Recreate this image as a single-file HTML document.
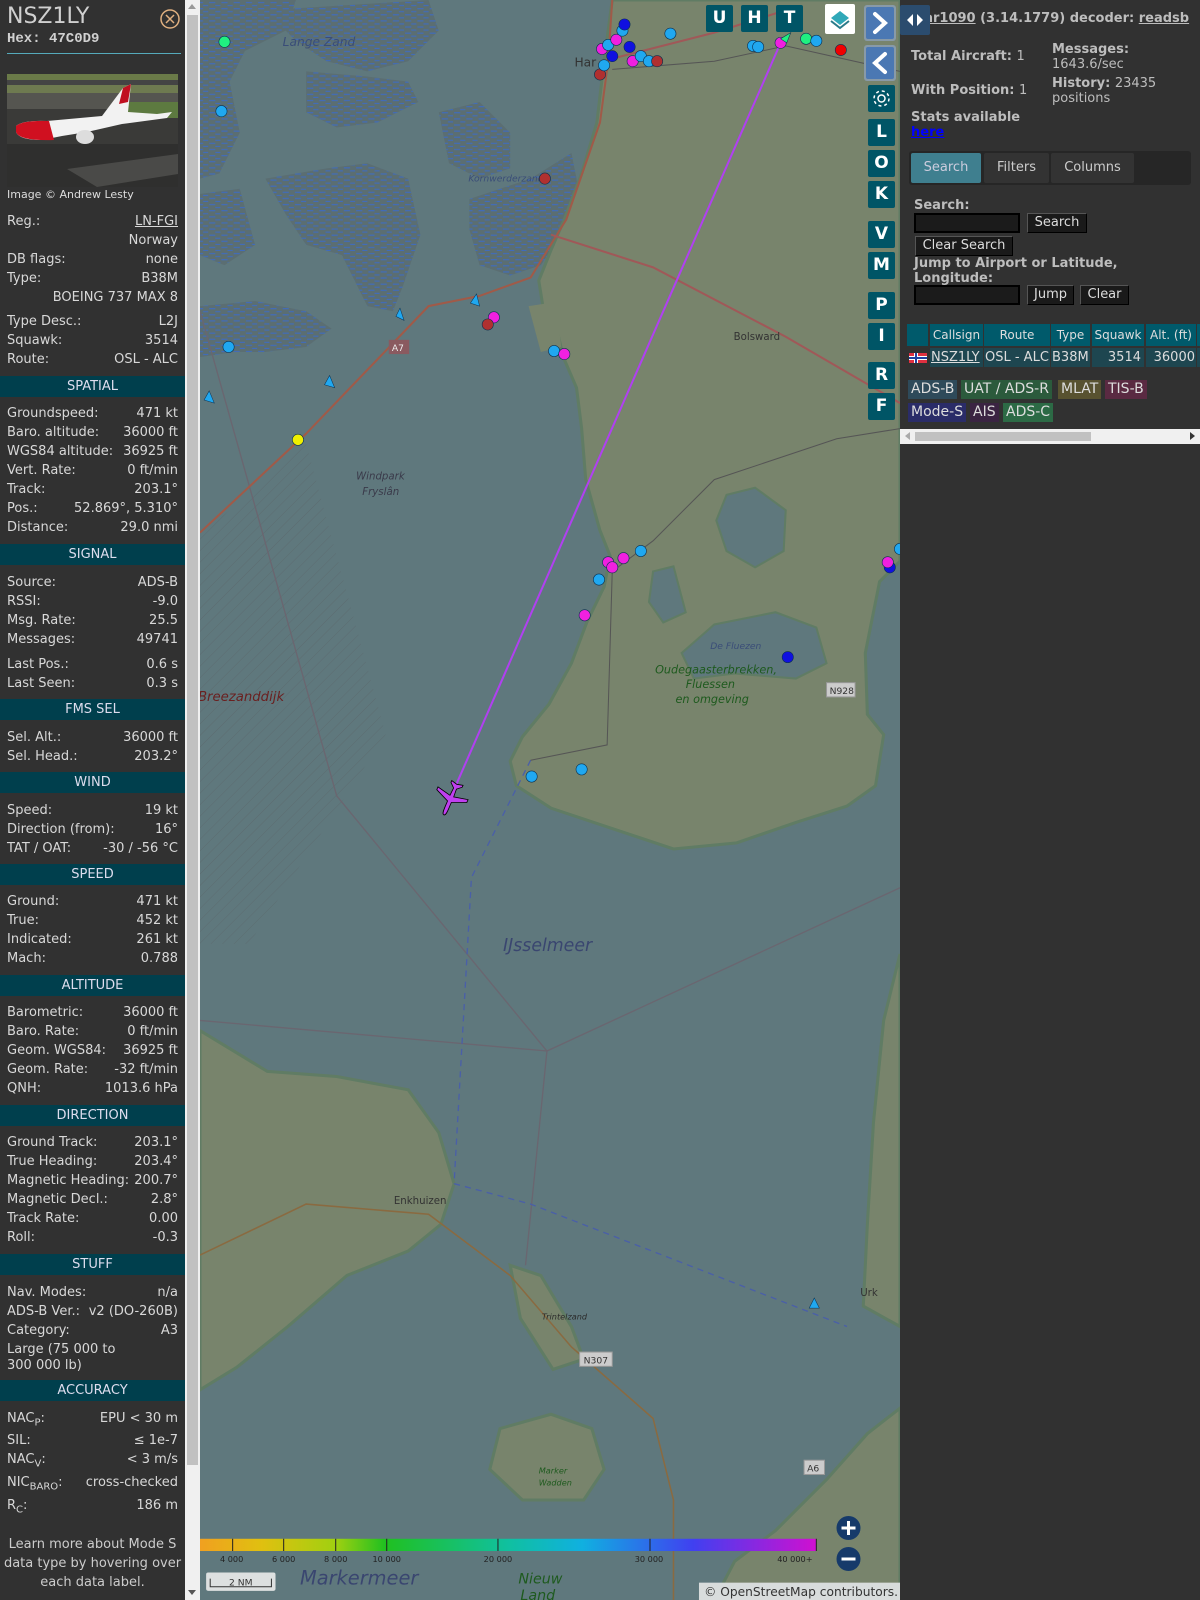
<!DOCTYPE html>
<html><head><meta charset="utf-8">
<style>
*{margin:0;padding:0;box-sizing:border-box}
body{width:1200px;height:1600px;overflow:hidden;background:#313131;font-family:"DejaVu Sans","Liberation Sans",sans-serif;position:relative}
#left{position:absolute;left:0;top:0;width:185px;height:1600px;background:#313131;color:#d8d8d8;font-size:13px}
.r{position:absolute;left:7px;width:171px;height:19px;line-height:19px;white-space:nowrap}
.r span{position:absolute;right:0;top:0}
.h{position:absolute;left:0;width:185px;height:21px;line-height:21px;background:#003f4d;color:#dde;text-align:center;font-size:13px}
#vs{position:absolute;left:185px;top:0;width:15px;height:1600px;background:#f0f0f0}
#map{position:absolute;left:200px;top:0;width:700px;height:1600px}
#right{position:absolute;left:900px;top:0;width:300px;height:1600px;background:#313131;color:#bdbdbd;font-size:13px}
.b{position:absolute;font-weight:bold;white-space:nowrap}
.btn{position:absolute;background:#1a1a1a;color:#ddd;border:1px solid #000;border-left-color:#555;border-top-color:#555;font-size:13px;line-height:17px;text-align:center}
.inp{position:absolute;background:#1b1b1b;border:2px solid #000}
.mb{position:absolute;width:27px;height:27px;background:#005566;color:#fff;font-weight:bold;font-size:17px;line-height:27px;text-align:center;border-radius:2px}
.th{position:absolute;top:324px;height:22px;line-height:22px;background:#005a6b;color:#ddd;font-size:12px;text-align:center}
.td{position:absolute;top:348px;height:19px;line-height:19px;background:#1e4650;color:#ddd;font-size:13px;white-space:nowrap}
.bd{position:absolute;height:19px;line-height:19px;font-size:14px;color:#ddd;padding:0 3px}
</style></head><body>
<div id="left">
<div style="position:absolute;left:7px;top:4px;font-size:22px;color:#d0d0d0">NSZ1LY</div>
<div style="position:absolute;left:7px;top:31px;font-size:14px;font-weight:bold;font-family:'Liberation Mono','DejaVu Sans Mono',monospace;color:#d0d0d0">Hex: 47C0D9</div>
<svg style="position:absolute;left:159px;top:8px" width="22" height="22"><circle cx="11" cy="11" r="9" fill="none" stroke="#e0b080" stroke-width="1.5"/><path d="M7 7L15 15M15 7L7 15" stroke="#e0b080" stroke-width="1.5"/></svg>
<div style="position:absolute;left:7px;top:53px;width:174px;height:1px;background:#5ab"></div>
<svg style="position:absolute;left:7px;top:74px" width="171" height="113">
<rect width="171" height="113" fill="#3a3a38"/>
<rect y="0" width="171" height="6" fill="#6a7a48"/><rect y="6" width="171" height="5" fill="#444"/>
<rect y="11" width="171" height="8" fill="#6e7a50"/><rect y="19" width="171" height="16" fill="#555550"/>
<rect x="110" y="28" width="61" height="16" fill="#5d7a40"/>
<rect y="70" width="171" height="43" fill="#2f2f2e"/><polygon points="60,95 171,80 171,100 90,113" fill="#4a4a48"/>
<path d="M9 52 Q16 46 40 47 L95 42 L116 14 L124 10 L121 38 L150 40 L165 38 L160 44 L115 50 L80 58 L55 62 L35 66 Q12 66 9 58Z" fill="#f2f2f2"/>
<path d="M9 52 Q16 46 42 47 L47 66 Q12 67 9 58Z" fill="#d01020"/>
<path d="M116 14 L124 10 L121 28 L112 30Z" fill="#c01020"/>
<ellipse cx="78" cy="63" rx="9" ry="7" fill="#ddd"/>
</svg>
<div style="position:absolute;left:7px;top:188px;font-size:11px;color:#ddd">Image © Andrew Lesty</div>
<div class="r" style="top:212px">Reg.:<span style="text-decoration:underline">LN-FGI</span></div>
<div class="r" style="top:231px"><span>Norway</span></div>
<div class="r" style="top:250px">DB flags:<span>none</span></div>
<div class="r" style="top:269px">Type:<span>B38M</span></div>
<div class="r" style="top:288px"><span>BOEING 737 MAX 8</span></div>
<div class="r" style="top:312px">Type Desc.:<span>L2J</span></div>
<div class="r" style="top:331px">Squawk:<span>3514</span></div>
<div class="r" style="top:350px">Route:<span>OSL - ALC</span></div>
<div class="h" style="top:376px">SPATIAL</div>
<div class="r" style="top:404px">Groundspeed:<span>471 kt</span></div>
<div class="r" style="top:423px">Baro. altitude:<span>36000 ft</span></div>
<div class="r" style="top:442px">WGS84 altitude:<span>36925 ft</span></div>
<div class="r" style="top:461px">Vert. Rate:<span>0 ft/min</span></div>
<div class="r" style="top:480px">Track:<span>203.1°</span></div>
<div class="r" style="top:499px">Pos.:<span>52.869°, 5.310°</span></div>
<div class="r" style="top:518px">Distance:<span>29.0 nmi</span></div>
<div class="h" style="top:544px">SIGNAL</div>
<div class="r" style="top:573px">Source:<span>ADS-B</span></div>
<div class="r" style="top:592px">RSSI:<span>-9.0</span></div>
<div class="r" style="top:611px">Msg. Rate:<span>25.5</span></div>
<div class="r" style="top:630px">Messages:<span>49741</span></div>
<div class="r" style="top:655px">Last Pos.:<span>0.6 s</span></div>
<div class="r" style="top:674px">Last Seen:<span>0.3 s</span></div>
<div class="h" style="top:699px">FMS SEL</div>
<div class="r" style="top:728px">Sel. Alt.:<span>36000 ft</span></div>
<div class="r" style="top:747px">Sel. Head.:<span>203.2°</span></div>
<div class="h" style="top:772px">WIND</div>
<div class="r" style="top:801px">Speed:<span>19 kt</span></div>
<div class="r" style="top:820px">Direction (from):<span>16°</span></div>
<div class="r" style="top:839px">TAT / OAT:<span>-30 / -56 °C</span></div>
<div class="h" style="top:864px">SPEED</div>
<div class="r" style="top:892px">Ground:<span>471 kt</span></div>
<div class="r" style="top:911px">True:<span>452 kt</span></div>
<div class="r" style="top:930px">Indicated:<span>261 kt</span></div>
<div class="r" style="top:949px">Mach:<span>0.788</span></div>
<div class="h" style="top:975px">ALTITUDE</div>
<div class="r" style="top:1003px">Barometric:<span>36000 ft</span></div>
<div class="r" style="top:1022px">Baro. Rate:<span>0 ft/min</span></div>
<div class="r" style="top:1041px">Geom. WGS84:<span>36925 ft</span></div>
<div class="r" style="top:1060px">Geom. Rate:<span>-32 ft/min</span></div>
<div class="r" style="top:1079px">QNH:<span>1013.6 hPa</span></div>
<div class="h" style="top:1105px">DIRECTION</div>
<div class="r" style="top:1133px">Ground Track:<span>203.1°</span></div>
<div class="r" style="top:1152px">True Heading:<span>203.4°</span></div>
<div class="r" style="top:1171px">Magnetic Heading:<span>200.7°</span></div>
<div class="r" style="top:1190px">Magnetic Decl.:<span>2.8°</span></div>
<div class="r" style="top:1209px">Track Rate:<span>0.00</span></div>
<div class="r" style="top:1228px">Roll:<span>-0.3</span></div>
<div class="h" style="top:1254px">STUFF</div>
<div class="r" style="top:1283px">Nav. Modes:<span>n/a</span></div>
<div class="r" style="top:1302px">ADS-B Ver.:<span>v2 (DO-260B)</span></div>
<div class="r" style="top:1321px">Category:<span>A3</span></div>
<div class="r" style="top:1340px">Large (75 000 to</div>
<div class="r" style="top:1356px">300 000 lb)</div>
<div class="h" style="top:1380px">ACCURACY</div>
<div class="r" style="top:1409px">NAC<sub style="font-size:10px">P</sub>:<span>EPU &lt; 30 m</span></div>
<div class="r" style="top:1431px">SIL:<span>≤ 1e-7</span></div>
<div class="r" style="top:1450px">NAC<sub style="font-size:10px">V</sub>:<span>&lt; 3 m/s</span></div>
<div class="r" style="top:1473px">NIC<sub style="font-size:10px">BARO</sub>:<span>cross-checked</span></div>
<div class="r" style="top:1496px">R<sub style="font-size:10px">C</sub>:<span>186 m</span></div>
<div style="position:absolute;left:0;top:1535px;width:185px;text-align:center;line-height:19px;color:#ccc">Learn more about Mode S data type by hovering over each data label.</div>
</div>
<div id="vs"><div style="position:absolute;left:2px;top:15px;width:11px;height:1450px;background:#c1c1c1"></div>
<div style="position:absolute;left:3px;top:4px;border:4px solid transparent;border-bottom:5px solid #999;border-top:0"></div>
<div style="position:absolute;left:3px;top:1590px;border:4px solid transparent;border-top:5px solid #555;border-bottom:0"></div></div>

<svg id="map" viewBox="196 0 686 1568" preserveAspectRatio="none" font-family="DejaVu Sans, sans-serif">
<defs>
<pattern id="dash" width="12" height="6" patternUnits="userSpaceOnUse"><rect width="12" height="6" fill="#5b6e72"/><path d="M1 2.5h6" stroke="#3f6cc0" stroke-width="1.1"/><path d="M7 5.5h5" stroke="#3f6cc0" stroke-width="1.1"/></pattern>
<pattern id="hatch" width="8" height="8" patternUnits="userSpaceOnUse" patternTransform="rotate(45)"><path d="M0 0v8" stroke="#5a6468" stroke-width="1"/></pattern>
</defs>
<rect x="196" y="0" width="686" height="1568" fill="#5f787d"/>
<g fill="url(#dash)">
<path d="M196 0H290L280 30 240 50 225 80 235 130 215 170 196 175Z"/>
<path d="M260 10L340 5 420 0 430 30 400 60 360 70 320 60 290 40Z"/>
<path d="M300 70L360 75 400 80 410 100 370 120 330 125 300 110Z"/>
<path d="M260 175L320 165 360 160 400 175 412 230 395 280 385 305 360 300 335 250 300 240 280 210Z"/>
<path d="M430 110L470 100 500 130 500 165 470 175 440 160Z"/>
<path d="M460 195L520 175 560 150 570 200 550 230 530 260 500 270 470 260 460 225Z"/>
<path d="M196 190L235 185 250 240 220 260 196 250Z"/>
<path d="M196 300L250 295 300 305 325 322 300 340 260 345 230 345 196 350Z"/>
</g>
<path d="M196 525L300 435 378 720 244 925 196 925Z" fill="url(#hatch)" opacity="0.6"/>
<g fill="#78846c" stroke="#607c64" stroke-width="3">
<path d="M600 0L592 60 585 120 570 170 553 215 540 245 528 275 532 300 545 320 552 350 565 380 570 420 574 470 588 520 598 545 592 575 575 610 560 650 538 690 512 722 500 746 506 770 540 792 600 812 660 832 722 826 780 806 830 790 858 770 866 720 850 700 848 640 862 570 882 550 882 0Z"/>
<path d="M882 935L866 1000 856 1100 850 1200 846 1280 882 1300Z"/>
<path d="M196 1010L262 1050 330 1055 400 1068 430 1110 445 1160 432 1200 400 1226 340 1250 282 1300 232 1340 196 1362Z"/>
<path d="M700 1568L720 1530 760 1500 810 1450 850 1405 882 1380 882 1568Z"/>
<path d="M500 1240L530 1250 560 1300 572 1332 542 1342 510 1292Z"/>
<path d="M490 1400L540 1386 580 1400 592 1440 572 1470 512 1470 480 1440Z"/>
</g>
<path d="M518 300L545 296 550 340 530 345Z" fill="#78846c"/>
<g fill="#5f787d" stroke="#607c64" stroke-width="2">
<path d="M668 640L700 612 760 600 800 615 810 650 780 665 720 660 680 665Z"/>
<path d="M712 485L740 478 770 500 768 540 740 556 712 540 702 510Z"/>
<path d="M640 560L660 555 672 600 650 610 636 590Z"/>
</g>
<g fill="none" stroke-width="1.3">
<path d="M196 305L330 780 536 1030 882 870" stroke="#6a6670"/>
<path d="M536 1030L515 1240M196 1000L536 1030" stroke="#6a6670"/>
<path d="M520 745L462 860 445 1160M445 1160L520 1180 830 1300" stroke="#4a5fa8" stroke-dasharray="6 5"/>
<path d="M196 522L300 425 420 300 470 290 520 272 555 215 588 120 596 60 600 0" stroke="#a05a48" stroke-width="2"/>
<path d="M540 230L640 262 770 330 882 395" stroke="#a05858" stroke-width="2"/>
<path d="M590 60L700 32 770 10" stroke="#a05858" stroke-width="2"/>
<path d="M600 68L700 60 770 45 882 70" stroke="#555" stroke-width="1"/>
<path d="M520 745L595 730 600 560 640 530 700 470 820 430 882 420" stroke="#555" stroke-width="1"/>
<path d="M196 1230L300 1180 420 1190 500 1250 560 1320 640 1390 660 1470 660 1568" stroke="#8a6a40" stroke-width="1.5"/>
</g>
<g font-style="italic" fill="#3a4d78">
<text x="277" y="45" font-size="12">Lange Zand</text>
<text x="459" y="178" font-size="9">Kornwerderzand</text>
<text x="349" y="470" font-size="10" fill="#3a3a4a">Windpark</text>
<text x="355" y="485" font-size="10" fill="#3a3a4a">Fryslân</text>
<text x="194" y="687" font-size="13" fill="#6a2020">Breezanddijk</text>
<text x="493" y="932" font-size="17" fill="#3a4670">IJsselmeer</text>
<text x="294" y="1553" font-size="19" fill="#3a4670">Markermeer</text>
<text x="508" y="1552" font-size="14" fill="#1e5a1e">Nieuw</text>
<text x="510" y="1568" font-size="14" fill="#1e5a1e">Land</text>
<text x="642" y="660" font-size="11" fill="#1e5a1e">Oudegaasterbrekken,</text>
<text x="672" y="674" font-size="11" fill="#1e5a1e">Fluessen</text>
<text x="662" y="689" font-size="11" fill="#1e5a1e">en omgeving</text>
<text x="696" y="636" font-size="9">De Fluezen</text>
<text x="531" y="1293" font-size="8" fill="#2a2a2a">Trintelzand</text>
<text x="528" y="1444" font-size="8" fill="#1e5a1e">Marker</text>
<text x="528" y="1456" font-size="8" fill="#1e5a1e">Wadden</text>
</g>
<g fill="#333" font-size="10">
<text x="719" y="333">Bolsward</text>
<text x="386" y="1180">Enkhuizen</text>
<text x="843" y="1270">Urk</text>
<text x="563" y="65" font-size="12">Har</text>
</g>
<g font-size="9" fill="#eee">
<rect x="381" y="333" width="20" height="14" fill="#8a5a60"/><text x="384" y="344">A7</text>
<rect x="810" y="669" width="28" height="14" fill="#ccc" stroke="#999"/><text x="813" y="680" fill="#333">N928</text>
<rect x="568" y="1325" width="32" height="14" fill="#ccc" stroke="#999"/><text x="572" y="1336" fill="#333">N307</text>
<rect x="788" y="1431" width="20" height="14" fill="#ccc" stroke="#999"/><text x="791" y="1442" fill="#333">A6</text>
</g>
<line x1="765" y1="42" x2="444" y2="776" stroke="#b040f0" stroke-width="2"/>
<g stroke="#0a3050" stroke-width="0.6">
<circle cx="220" cy="41" r="5.5" fill="#20f080"/>
<circle cx="217" cy="109" r="5.5" fill="#20a8f0"/>
<circle cx="224" cy="340" r="5.5" fill="#20a8f0"/>
<circle cx="292" cy="431" r="5.5" fill="#f0f000"/>
<circle cx="534" cy="175" r="5.5" fill="#b03030"/>
<circle cx="484" cy="311" r="5.5" fill="#f020e0"/>
<circle cx="478" cy="318" r="5.5" fill="#b03030"/>
<circle cx="543" cy="344" r="5.5" fill="#20a8f0"/>
<circle cx="553" cy="347" r="5.5" fill="#f020e0"/>
<circle cx="587" cy="568" r="5.5" fill="#20a8f0"/>
<circle cx="596" cy="551" r="5.5" fill="#f020e0"/>
<circle cx="600" cy="556" r="5.5" fill="#f020e0"/>
<circle cx="611" cy="547" r="5.5" fill="#f020e0"/>
<circle cx="628" cy="540" r="5.5" fill="#20a8f0"/>
<circle cx="573" cy="603" r="5.5" fill="#f020e0"/>
<circle cx="772" cy="644" r="5.5" fill="#1010e0"/>
<circle cx="570" cy="754" r="5.5" fill="#20a8f0"/>
<circle cx="521" cy="761" r="5.5" fill="#20a8f0"/>
<circle cx="872" cy="556" r="5.5" fill="#1010e0"/>
<circle cx="870" cy="551" r="5.5" fill="#f020e0"/>
<circle cx="882" cy="538" r="5.5" fill="#20a8f0"/>
<circle cx="738" cy="45" r="5.5" fill="#20a8f0"/>
<circle cx="743" cy="46" r="5.5" fill="#20a8f0"/>
<circle cx="765" cy="42" r="5.5" fill="#f020e0"/>
<circle cx="790" cy="38" r="5.5" fill="#20f080"/>
<circle cx="800" cy="40" r="5.5" fill="#20a8f0"/>
<circle cx="824" cy="49" r="5.5" fill="#f00000"/>
<circle cx="588" cy="73" r="5.5" fill="#b03030"/>
<circle cx="590" cy="48" r="5.5" fill="#f020e0"/>
<circle cx="596" cy="44" r="5.5" fill="#20a8f0"/>
<circle cx="604" cy="39" r="5.5" fill="#f020e0"/>
<circle cx="610" cy="30" r="5.5" fill="#20a8f0"/>
<circle cx="612" cy="24" r="5.5" fill="#1010e0"/>
<circle cx="617" cy="46" r="5.5" fill="#1010e0"/>
<circle cx="620" cy="60" r="5.5" fill="#f020e0"/>
<circle cx="628" cy="55" r="5.5" fill="#20a8f0"/>
<circle cx="636" cy="60" r="5.5" fill="#20a8f0"/>
<circle cx="644" cy="60" r="5.5" fill="#b03030"/>
<circle cx="592" cy="64" r="5.5" fill="#20a8f0"/>
<circle cx="600" cy="55" r="5.5" fill="#1010e0"/>
<circle cx="657" cy="33" r="5.5" fill="#20a8f0"/>
</g>
<g fill="#20a8f0" stroke="#0a3050" stroke-width="0.5">
<path d="M392 302l4 12-8-4z"/><path d="M467 288l3 12-9-3z"/><path d="M323 368l5 12-10-3z"/><path d="M205 383l5 12-10-3z"/><path d="M798 1272l5 10-10 0z"/><path d="M765 38l10-6-4 10z" fill="#20f080"/>
</g>
<g transform="translate(442,782) rotate(203)" fill="#c040f0" stroke="#000" stroke-width="0.8">
<path d="M0 -18 C2 -18 2 -14 2 -10 L2 -4 L16 2 L16 5 L2 2 L1.5 10 L6 14 L6 16 L0 14.5 L-6 16 L-6 14 L-1.5 10 L-2 2 L-16 5 L-16 2 L-2 -4 L-2 -10 C-2 -14 -2 -18 0 -18Z"/>
</g>
<defs><linearGradient id="cb" x1="0" x2="1">
<stop offset="0" stop-color="#f0a020"/><stop offset="0.1" stop-color="#e0c010"/><stop offset="0.22" stop-color="#a0d010"/><stop offset="0.3" stop-color="#20c020"/><stop offset="0.5" stop-color="#10c0a0"/><stop offset="0.62" stop-color="#10b0e0"/><stop offset="0.8" stop-color="#4040f0"/><stop offset="1" stop-color="#d010d0"/></linearGradient></defs>
<rect x="196" y="1508" width="604" height="12" fill="url(#cb)"/>
<g stroke="#222" stroke-width="1"><path d="M228 1508v12M278 1508v12M329 1508v12M379 1508v12M488 1508v12M637 1508v12M800 1508v12"/></g>
<g font-size="8" fill="#222" text-anchor="middle"><text x="227" y="1531">4 000</text><text x="278" y="1531">6 000</text><text x="329" y="1531">8 000</text><text x="379" y="1531">10 000</text><text x="488" y="1531">20 000</text><text x="636" y="1531">30 000</text><text x="779" y="1531">40 000+</text></g>
<rect x="202" y="1541" width="68" height="18" rx="2" fill="#dde0e0"/>
<path d="M206 1547v8h60v-8" fill="none" stroke="#333"/>
<text x="236" y="1554" font-size="9" fill="#333" text-anchor="middle">2 NM</text>
<rect x="685" y="1551" width="197" height="17" fill="#d8dcdc"/>
<text x="690" y="1564" font-size="12" fill="#333">© OpenStreetMap contributors.</text>
</svg>
<div class="mb" style="left:706px;top:5px">U</div>
<div class="mb" style="left:741px;top:5px">H</div>
<div class="mb" style="left:776px;top:5px">T</div>
<div style="position:absolute;left:825px;top:4px;width:30px;height:30px;background:#fff;border-radius:2px"><svg width="30" height="30"><path d="M15 7l9 7-9 7-9-7z" fill="#30a8b8"/><path d="M6 17l9 7 9-7" fill="none" stroke="#2a7a8a" stroke-width="2"/></svg></div>
<div style="position:absolute;left:864px;top:5px;width:32px;height:36px;background:#889aa8;border-radius:3px"><div style="position:absolute;left:2px;top:2px;width:28px;height:32px;background:#4b78b3;border-radius:2px"><svg width="28" height="32"><path d="M9 7l10 9-10 9" fill="none" stroke="#fff" stroke-width="4" stroke-linecap="round"/></svg></div></div>
<div style="position:absolute;left:864px;top:45px;width:32px;height:36px;background:#889aa8;border-radius:3px"><div style="position:absolute;left:2px;top:2px;width:28px;height:32px;background:#4b78b3;border-radius:2px"><svg width="28" height="32"><path d="M19 7l-10 9 10 9" fill="none" stroke="#fff" stroke-width="4" stroke-linecap="round"/></svg></div></div>
<div class="mb" style="left:868px;top:85px"><svg width="27" height="27"><circle cx="13.5" cy="13.5" r="3.5" fill="none" stroke="#fff" stroke-width="1.5"/><circle cx="13.5" cy="13.5" r="7.5" fill="none" stroke="#fff" stroke-width="1.5" stroke-dasharray="3 2.9"/></svg></div>
<div class="mb" style="left:868px;top:119px">L</div>
<div class="mb" style="left:868px;top:150px">O</div>
<div class="mb" style="left:868px;top:181px">K</div>
<div class="mb" style="left:868px;top:221px">V</div>
<div class="mb" style="left:868px;top:252px">M</div>
<div class="mb" style="left:868px;top:292px">P</div>
<div class="mb" style="left:868px;top:323px">I</div>
<div class="mb" style="left:868px;top:362px">R</div>
<div class="mb" style="left:868px;top:393px">F</div>
<svg style="position:absolute;left:836px;top:1516px" width="25" height="58"><circle cx="12.5" cy="12" r="12" fill="#163a6a"/><path d="M12.5 5v14M5.5 12h14" stroke="#fff" stroke-width="3"/><circle cx="12.5" cy="43" r="12" fill="#163a6a"/><path d="M5.5 43h14" stroke="#fff" stroke-width="3"/></svg>

<div id="right">
<div class="b" style="left:18px;top:11px;font-size:13px">t<span style="text-decoration:underline">ar1090</span> (3.14.1779) decoder: <span style="text-decoration:underline">readsb</span></div>
<div style="position:absolute;left:0;top:5px;width:30px;height:30px;background:#2b4c6e;border-radius:2px"><svg width="30" height="30"><path d="M13 9l-6 6 6 6z M17 9l6 6-6 6z" fill="#fff"/></svg></div>
<div class="b" style="left:11px;top:49px">Total Aircraft: <span style="font-weight:normal">1</span></div>
<div class="b" style="left:152px;top:42px">Messages:</div>
<div class="b" style="left:152px;top:57px;font-weight:normal">1643.6/sec</div>
<div class="b" style="left:11px;top:83px">With Position: <span style="font-weight:normal">1</span></div>
<div class="b" style="left:152px;top:76px">History: <span style="font-weight:normal">23435</span></div>
<div class="b" style="left:152px;top:91px;font-weight:normal">positions</div>
<div class="b" style="left:11px;top:110px">Stats available</div>
<div class="b" style="left:11px;top:125px;color:#00f;text-decoration:underline">here</div>
<div style="position:absolute;left:9px;top:151px;width:282px;height:34px;background:#262626;border-radius:3px"></div>
<div style="position:absolute;left:11px;top:153px;width:70px;height:30px;background:#3f7f8f;color:#ccd;line-height:30px;text-align:center;border-radius:2px">Search</div>
<div style="position:absolute;left:84px;top:153px;width:65px;height:30px;background:#333;color:#ccc;line-height:30px;text-align:center;border-radius:2px">Filters</div>
<div style="position:absolute;left:151px;top:153px;width:83px;height:30px;background:#333;color:#ccc;line-height:30px;text-align:center;border-radius:2px">Columns</div>
<div class="b" style="left:14px;top:198px">Search:</div>
<div class="inp" style="left:14px;top:213px;width:106px;height:20px"></div>
<div class="btn" style="left:127px;top:213px;width:60px;height:20px">Search</div>
<div class="btn" style="left:15px;top:236px;width:98px;height:20px">Clear Search</div>
<div class="b" style="left:14px;top:256px">Jump to Airport or Latitude,</div>
<div class="b" style="left:14px;top:271px">Longitude:</div>
<div class="inp" style="left:14px;top:285px;width:106px;height:20px"></div>
<div class="btn" style="left:127px;top:285px;width:47px;height:20px">Jump</div>
<div class="btn" style="left:180px;top:285px;width:49px;height:20px">Clear</div>
<div class="th" style="left:7px;width:21px"></div>
<div class="th" style="left:30px;width:53px">Callsign</div>
<div class="th" style="left:84px;width:66px">Route</div>
<div class="th" style="left:151px;width:39px">Type</div>
<div class="th" style="left:192px;width:52px">Squawk</div>
<div class="th" style="left:246px;width:50px">Alt. (ft)</div>
<div class="th" style="left:297px;width:3px"></div>
<div class="td" style="left:7px;width:21px;background:transparent"><svg width="20" height="19"><rect x="2" y="5" width="18" height="10" fill="#e03040"/><rect x="7" y="5" width="4" height="10" fill="#fff"/><rect x="2" y="8" width="18" height="4" fill="#fff"/><rect x="8" y="5" width="2" height="10" fill="#2040a0"/><rect x="2" y="9" width="18" height="2" fill="#2040a0"/></svg></div>
<div class="td" style="left:30px;width:53px;text-decoration:underline;padding-left:1px">NSZ1LY</div>
<div class="td" style="left:84px;width:66px;padding-left:1px">OSL - ALC</div>
<div class="td" style="left:151px;width:39px;padding-left:1px">B38M</div>
<div class="td" style="left:192px;width:52px;text-align:right;padding-right:3px">3514</div>
<div class="td" style="left:246px;width:50px;text-align:right;padding-right:1px">36000</div>
<div class="td" style="left:297px;width:3px"></div>
<div class="bd" style="left:8px;top:380px;background:#2e4a5a">ADS-B</div>
<div class="bd" style="left:61px;top:380px;background:#2b5a3c">UAT / ADS-R</div>
<div class="bd" style="left:158px;top:380px;background:#585230">MLAT</div>
<div class="bd" style="left:205px;top:380px;background:#5a2a42">TIS-B</div>
<div class="bd" style="left:8px;top:403px;background:#2a2c68">Mode-S</div>
<div class="bd" style="left:70px;top:403px;background:#3a2442">AIS</div>
<div class="bd" style="left:103px;top:403px;background:#2c6a45">ADS-C</div>
<div style="position:absolute;left:0;top:429px;width:300px;height:15px;background:#f0f0f0"><div style="position:absolute;left:15px;top:3px;width:176px;height:9px;background:#c1c1c1"></div>
<div style="position:absolute;left:5px;top:3px;border:4px solid transparent;border-right:5px solid #aaa;border-left:0"></div>
<div style="position:absolute;left:290px;top:3px;border:4px solid transparent;border-left:5px solid #333;border-right:0"></div></div>
</div>
</body></html>
